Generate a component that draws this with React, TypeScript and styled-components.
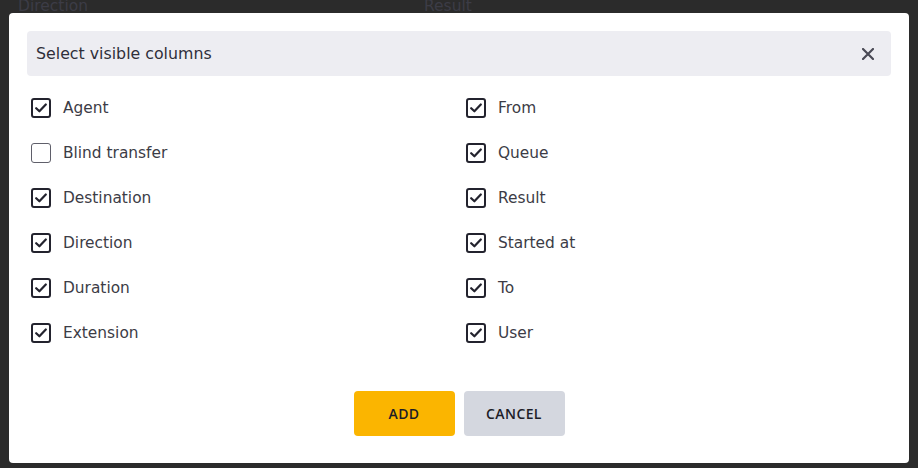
import React, {useState} from 'react';
import styled, {createGlobalStyle} from 'styled-components';

const GlobalStyle = createGlobalStyle`
  html, body {
    margin: 0;
    padding: 0;
    background: #2b2b2b;
    font-family: "DejaVu Sans", "Liberation Sans", sans-serif;
  }
  * { box-sizing: border-box; }
`;

const Page = styled.div`
  width: 918px;
  height: 468px;
  overflow: hidden;
  background: #2b2b2b;
`;
const TableHead = styled.div`
  display: grid;
  grid-template-columns: 406px 1fr;
  padding: 0 18px;
  margin-top: -3px;
  font-size: 15.5px;
  color: #3c3c46;
`;
const Overlay = styled.div`
  position: fixed;
  inset: 0;
  display: flex;
  align-items: flex-start;
  justify-content: center;
  padding-top: 13px;
`;
const Dialog = styled.div`
  width: 900px;
  height: 450px;
  background: #fff;
  border-radius: 4px;
  padding: 18px 18px 27px;
  display: flex;
  flex-direction: column;
`;
const Header = styled.div`
  height: 45px;
  background: #ededf2;
  border-radius: 4px;
  display: flex;
  align-items: center;
  justify-content: space-between;
  padding: 0 12px 0 9px;
`;
const Title = styled.span`
  font-size: 15.8px;
  color: #2f2f3a;
`;
const CloseButton = styled.button`
  border: 0;
  background: none;
  padding: 0;
  width: 22px;
  height: 22px;
  display: flex;
  align-items: center;
  justify-content: center;
  cursor: pointer;
`;
const Columns = styled.div`
  display: grid;
  grid-template-columns: 1fr 1fr;
  column-gap: 6px;
  margin-top: 9px;
`;
const Row = styled.label`
  height: 45px;
  display: flex;
  align-items: center;
  gap: 12px;
  padding-left: 4px;
  font-size: 15.4px;
  color: #3c3c46;
  cursor: pointer;
`;
const Box = styled.span<{ $checked: boolean }>`
  width: 20px;
  height: 20px;
  flex: none;
  border-radius: 3px;
  border: ${p => p.$checked ? '2px solid #23232e' : '1.5px solid #5f5f6a'};
  display: flex;
  align-items: center;
  justify-content: center;
`;
const Footer = styled.div`
  margin-top: auto;
  display: flex;
  justify-content: center;
  gap: 9px;
`;
const Button = styled.button<{ $primary?: boolean }>`
  width: 101px;
  height: 45px;
  border: 0;
  border-radius: 4px;
  background: ${p => p.$primary ? '#fbb500' : '#d4d7df'};
  color: #1d1d27;
  font-family: "Open Sans", "Liberation Sans", sans-serif;
  font-size: 14px;
  font-weight: 600;
  letter-spacing: 0.4px;
  text-transform: uppercase;
  cursor: pointer;
`;

const left = ['Agent', 'Blind transfer', 'Destination', 'Direction', 'Duration', 'Extension'];
const right = ['From', 'Queue', 'Result', 'Started at', 'To', 'User'];

const Check: React.FC<{ label: string, checked: boolean, onToggle: () => void }> = ({label, checked, onToggle}) => (
  <Row onClick={onToggle}>
    <Box $checked={checked}>
      {checked && (
        <svg width="12" height="10" viewBox="0 0 12 10">
          <path d="M1.2 5.2 L4.4 8.3 L10.8 1.5" fill="none" stroke="#23232e" strokeWidth="2.2" strokeLinecap="round"
                strokeLinejoin="round"/>
        </svg>
      )}
    </Box>
    <span>{label}</span>
  </Row>
);

export default function App() {
  const [checked, setChecked] = useState<Record<string, boolean>>(() => {
    const s: Record<string, boolean> = {};
    [...left, ...right].forEach(n => s[n] = n !== 'Blind transfer');
    return s;
  });
  const toggle = (n: string) => setChecked({...checked, [n]: !checked[n]});
  const rows: string[] = [];
  left.forEach((n, i) => rows.push(n, right[i]));
  return (
    <Page>
      <GlobalStyle/>
      <TableHead>
        <span>Direction</span>
        <span>Result</span>
      </TableHead>
      <Overlay>
        <Dialog>
          <Header>
            <Title>Select visible columns</Title>
            <CloseButton>
              <svg width="12" height="12" viewBox="0 0 12 12">
                <path d="M1 1 L11 11 M11 1 L1 11" stroke="#4a4a56" strokeWidth="2.2" strokeLinecap="round"/>
              </svg>
            </CloseButton>
          </Header>
          <Columns>
            {rows.map(n => <Check key={n} label={n} checked={checked[n]} onToggle={() => toggle(n)}/>)}
          </Columns>
          <Footer>
            <Button $primary>Add</Button>
            <Button>Cancel</Button>
          </Footer>
        </Dialog>
      </Overlay>
    </Page>
  );
}
